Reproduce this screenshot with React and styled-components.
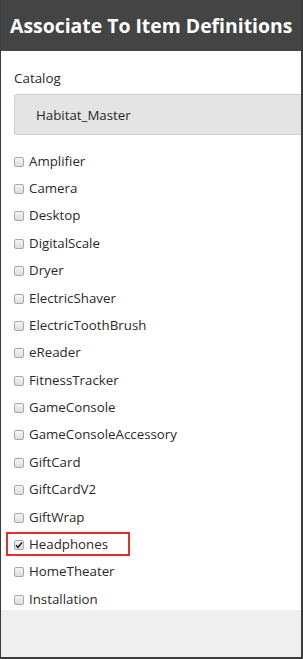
import styled, { createGlobalStyle } from "styled-components";

const Global = createGlobalStyle`
  html, body {
    margin: 0;
    padding: 0;
    background: #fff;
  }
  * { box-sizing: border-box; }
`;

const Frame = styled.div`
  width: 303px;
  height: 659px;
  border-left: 1px solid #3c3c3c;
  border-right: 2px solid #3c3c3c;
  border-bottom: 2px solid #3c3c3c;
  display: flex;
  flex-direction: column;
  font-family: "Open Sans", "Liberation Sans", sans-serif;
  overflow: hidden;
`;

const Header = styled.div`
  height: 51px;
  background: #444444;
  color: #fff;
  display: flex;
  align-items: center;
  padding-left: 9px;
  font-size: 19.4px;
  font-weight: 700;
  white-space: nowrap;
`;

const Body = styled.div`
  padding: 16px 0 0 13px;
  height: 559px;
  background: #fff;
`;

const Label = styled.div`
  font-size: 13.4px;
  color: #2a2a2a;
  line-height: 22px;
  margin-bottom: 5px;
`;

const Select = styled.div`
  height: 41px;
  background: #e4e4e4;
  border: 1px solid #cfcfcf;
  border-right: none;
  border-radius: 3px 0 0 3px;
  display: flex;
  align-items: center;
  padding-left: 21px;
  font-size: 13.3px;
  color: #2a2a2a;
  margin-bottom: 12px;
`;

const List = styled.div`
  display: flex;
  flex-direction: column;
`;

const Row = styled.label`
  display: flex;
  align-items: center;
  height: 27.375px;
  font-size: 13.3px;
  color: #2a2a2a;
  width: ${(p) => (p.$marked ? "128px" : "auto")};
  margin-left: ${(p) => (p.$marked ? "-10px" : "0")};
  padding-left: ${(p) => (p.$marked ? "10px" : "0")};
  outline: ${(p) => (p.$marked ? "2px solid #e0302a" : "none")};
  outline-offset: -4px;
`;

const Box = styled.span`
  width: 10px;
  height: 10px;
  border: 1px solid #a8a8a8;
  border-radius: 2px;
  background: linear-gradient(#f4f4f4, #dedede);
  margin-right: 5px;
  margin-top: 2px;
  display: flex;
  align-items: center;
  justify-content: center;
`;

const Footer = styled.div`
  flex: 1;
  background: #efefef;
`;

const items = [
  "Amplifier",
  "Camera",
  "Desktop",
  "DigitalScale",
  "Dryer",
  "ElectricShaver",
  "ElectricToothBrush",
  "eReader",
  "FitnessTracker",
  "GameConsole",
  "GameConsoleAccessory",
  "GiftCard",
  "GiftCardV2",
  "GiftWrap",
  "Headphones",
  "HomeTheater",
  "Installation",
];

export default function App() {
  return (
    <>
      <Global />
      <Frame>
        <Header>Associate To Item Definitions</Header>
        <Body>
          <Label>Catalog</Label>
          <Select>Habitat_Master</Select>
          <List>
            {items.map((name) => {
              const on = name === "Headphones";
              return (
                <Row key={name} $marked={on}>
                  <Box>
                    {on && (
                      <svg width="8" height="8" viewBox="0 0 8 8">
                        <path d="M1 4.2 L3 6.2 L7 1.5" fill="none" stroke="#222" strokeWidth="1.6" />
                      </svg>
                    )}
                  </Box>
                  {name}
                </Row>
              );
            })}
          </List>
        </Body>
        <Footer />
      </Frame>
    </>
  );
}
